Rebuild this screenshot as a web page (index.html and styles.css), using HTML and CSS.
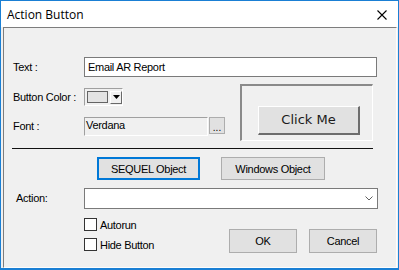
FILE: index.html
```html
<!DOCTYPE html>
<html>
<head>
<meta charset="utf-8">
<link rel="stylesheet" href="styles.css">
</head>
<body>
<div class="window">
  <div class="titlebar">
    <span class="title">Action Button</span>
    <svg class="close" width="10" height="10" viewBox="0 0 10 10"><path d="M0.5 0.5 L9.5 9.5 M9.5 0.5 L0.5 9.5" stroke="#000" stroke-width="1.1" fill="none"/></svg>
  </div>
  <div class="frame">
    <div class="panel">
      <div class="row row-text">
        <span class="label">Text :</span>
        <div class="input text-input">Email AR Report</div>
      </div>
      <div class="section2">
        <div class="leftcol">
          <div class="row row-color">
            <span class="label">Button Color :</span>
            <div class="colorcombo">
              <div class="swatch"></div>
              <div class="dropbtn"><svg width="7" height="4" viewBox="0 0 7 4"><path d="M0 0 H7 L3.5 4 Z" fill="#000"/></svg></div>
            </div>
          </div>
          <div class="row row-font">
            <span class="label">Font :</span>
            <div class="fontfield">Verdana</div>
            <div class="dots">...</div>
          </div>
        </div>
        <div class="preview">
          <div class="clickme">Click Me</div>
        </div>
      </div>
      <div class="rule"></div>
      <div class="typebtns">
        <div class="btn btn-focus">SEQUEL Object</div>
        <div class="btn btn-win">Windows Object</div>
      </div>
      <div class="row row-action">
        <span class="label action-label">Action:</span>
        <div class="combo">
          <svg class="chev" width="8" height="5" viewBox="0 0 8 5"><path d="M0.5 0.5 L4 4 L7.5 0.5" stroke="#606060" stroke-width="1" fill="none"/></svg>
        </div>
      </div>
      <div class="bottom">
        <div class="checks">
          <label class="check"><span class="box"></span><span>Autorun</span></label>
          <label class="check"><span class="box"></span><span>Hide Button</span></label>
        </div>
        <div class="okcancel">
          <div class="btn btn-ok">OK</div>
          <div class="btn btn-ok">Cancel</div>
        </div>
      </div>
    </div>
  </div>
</div>
</body>
</html>
```
FILE: styles.css
```css
* { box-sizing: border-box; }
html, body { margin: 0; padding: 0; background: #fff; }
body {
  font-family: "Liberation Sans", Arial, sans-serif;
  font-size: 11px;
  letter-spacing: -0.3px;
  color: #000;
}
.window {
  width: 399px;
  height: 270px;
  border: 1px solid #1a7fd4;
  border-bottom-width: 2px;
  background: #f0f0f0;
  display: flex;
  flex-direction: column;
}
.titlebar {
  height: 26px;
  background: #fff;
  display: flex;
  align-items: center;
  justify-content: space-between;
  padding: 0 11px 0 6px;
  flex: none;
}
.title {
  font-family: "Open Sans", "Noto Sans", sans-serif;
  font-size: 12px;
  letter-spacing: 0;
}
.close { margin-top: 1px; }
.frame {
  flex: 1;
  padding: 0 1px 0 2px;
  display: flex;
}
.panel {
  flex: 1;
  border-top: 1px solid #7d7d7d;
  border-left: 1px solid #7d7d7d;
  border-right: 1px solid #fdfdfd;
  border-bottom: 1px solid #fdfdfd;
  padding-left: 9px;
  display: flex;
  flex-direction: column;
}
.row { display: flex; align-items: center; }
.label { width: 71px; flex: none; line-height: 13px; }
.row-text { margin-top: 29px; height: 20px; }
.input {
  height: 20px;
  background: #fff;
  border: 1px solid #7a7a7a;
  padding: 0 3px;
  line-height: 18px;
}
.text-input { width: 293px; }
.section2 {
  margin-top: 7px;
  display: flex;
  height: 57px;
}
.leftcol { width: 227px; }
.row-color { margin-top: 4px; height: 18px; }
.colorcombo {
  width: 39px;
  height: 18px;
  border-top: 1px solid #a0a0a0;
  border-left: 1px solid #a0a0a0;
  border-right: 1px solid #fff;
  border-bottom: 1px solid #fff;
  display: flex;
  align-items: center;
  padding-left: 2px;
}
.swatch {
  width: 22px;
  height: 12px;
  border: 1px solid #646464;
  background: #e3e3e3;
}
.dropbtn {
  margin-left: 2px;
  width: 12px;
  height: 13px;
  background: #f0f0f0;
  border-top: 1px solid #fff;
  border-left: 1px solid #fff;
  border-right: 1px solid #696969;
  border-bottom: 1px solid #696969;
  display: flex;
  align-items: center;
  justify-content: center;
}
.row-font { margin-top: 11px; height: 19px; align-items: flex-start; }
.row-font .label { margin-top: 3px; }
.fontfield {
  width: 124px;
  height: 19px;
  border-top: 1px solid #a0a0a0;
  border-left: 1px solid #a0a0a0;
  border-right: 1px solid #fff;
  border-bottom: 1px solid #fff;
  background: #f0f0f0;
  line-height: 14px;
  padding-left: 1px;
}
.dots {
  margin-left: 1px;
  width: 16px;
  height: 17px;
  background: #e1e1e1;
  border: 1px solid #adadad;
  text-align: center;
  line-height: 20px;
  font-size: 10px;
  letter-spacing: 0;
}
.preview {
  width: 133px;
  height: 57px;
  border-top: 2px solid #8a8a8a;
  border-left: 2px solid #8a8a8a;
  border-right: 1px solid #fff;
  border-bottom: 1px solid #fff;
  padding: 20px 0 0 16px;
}
.clickme {
  width: 102px;
  height: 29px;
  background: #e1e1e1;
  border-top: 1px solid #fff;
  border-left: 1px solid #fff;
  border-right: 2px solid #6d6d6d;
  border-bottom: 2px solid #6d6d6d;
  font-family: "DejaVu Sans", Verdana, sans-serif;
  font-size: 13px;
  letter-spacing: 0;
  text-align: center;
  line-height: 26px;
  color: #1a1a1a;
}
.rule {
  margin-top: 7px;
  margin-left: -1px;
  width: 361px;
  height: 1px;
  background: #111;
}
.typebtns {
  margin-top: 8px;
  display: flex;
  gap: 21px;
  padding-left: 84px;
}
.btn {
  height: 23px;
  background: #e1e1e1;
  border: 1px solid #adadad;
  display: flex;
  align-items: center;
  justify-content: center;
}
.btn-focus { width: 103px; border: 2px solid #0078d7; }
.btn-win { width: 104px; }
.row-action { margin-top: 8px; height: 21px; }
.action-label { width: 71px; padding-left: 3px; }
.combo {
  width: 294px;
  height: 21px;
  background: #fff;
  border: 1px solid #7a7a7a;
  display: flex;
  align-items: center;
  justify-content: flex-end;
  padding-right: 4px;
}
.bottom {
  margin-top: 9px;
  display: flex;
  padding-left: 71px;
}
.checks { display: flex; flex-direction: column; gap: 7px; width: 145px; }
.check { display: flex; align-items: center; height: 13px; gap: 3px; }
.box {
  width: 13px;
  height: 13px;
  background: #fff;
  border: 1px solid #333;
  flex: none;
}
.okcancel {
  margin-top: 11px;
  display: flex;
  gap: 12px;
}
.btn-ok { width: 68px; height: 24px; }
```
